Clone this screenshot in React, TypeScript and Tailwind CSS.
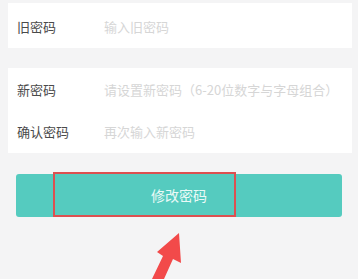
export default function App() {
  const font = { fontFamily: '"Noto Sans CJK SC", "Noto Sans", sans-serif' };
  return (
    <div className="relative w-[358px] h-[279px] overflow-hidden bg-[#f4f4f5]" style={font}>
      <div className="pt-[3px] pl-[8px] pr-[6px]">
        <div className="bg-white h-[45px] flex items-center pl-[9px] pt-[2px]">
          <span className="w-[87px] text-[13px] text-[#4a4a4a]">旧密码</span>
          <span className="text-[13px] text-[#d6d6d6]">输入旧密码</span>
        </div>
        <div className="h-[20px]" />
        <div className="bg-white">
          <div className="h-[43px] flex items-center pl-[9px]">
            <span className="w-[87px] text-[13px] text-[#4a4a4a]">新密码</span>
            <span className="text-[13px] text-[#d6d6d6] whitespace-nowrap">请设置新密码（6-20位数字与字母组合）</span>
          </div>
          <div className="h-[42px] flex items-center pl-[9px]">
            <span className="w-[87px] text-[13px] text-[#4a4a4a]">确认密码</span>
            <span className="text-[13px] text-[#d6d6d6]">再次输入新密码</span>
          </div>
        </div>
      </div>
      <div className="mt-[21px] mx-[16px] w-[326px] h-[43px] rounded-[3px] bg-[#55cbbf] flex items-center justify-center">
        <span className="text-[14px] text-[#eafaf7]">修改密码</span>
      </div>
      <div className="absolute left-[53px] top-[172px] w-[183px] h-[45px] border-2 border-[#dc5050]" />
      <svg className="absolute left-0 top-0" width="358" height="279" viewBox="0 0 358 279">
        <path d="M179 233 L181 263 L173 259 L164 279 L152 279 L163 256 L157 252 Z" fill="#f24a4a" />
      </svg>
    </div>
  );
}
